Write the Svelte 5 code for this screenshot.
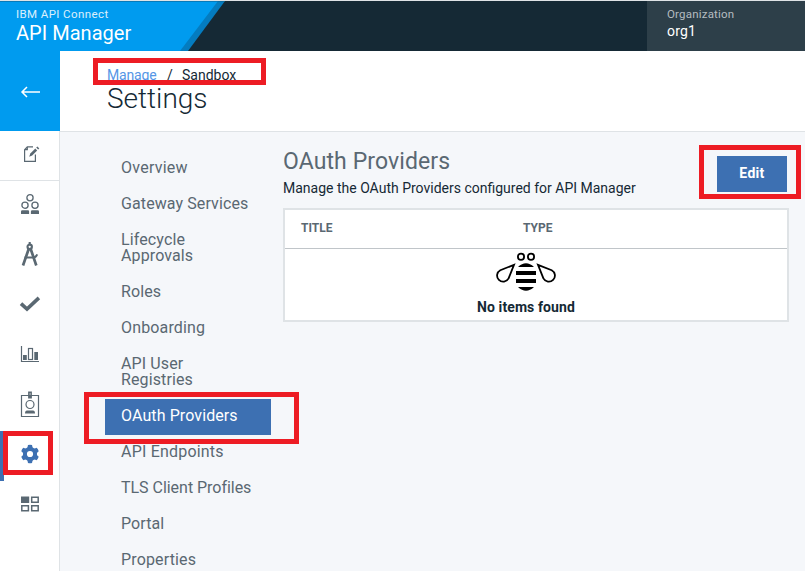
<script>
  const nav = [
    { lines: ['Overview'], ls: 0.25 },
    { lines: ['Gateway Services'], ls: 0.1 },
    { lines: ['Lifecycle', 'Approvals'], ls: 0.12 },
    { lines: ['Roles'], ls: 0.1 },
    { lines: ['Onboarding'], ls: 0.15 },
    { lines: ['API User', 'Registries'], ls: 0.12 },
    { lines: ['OAuth Providers'], ls: 0.1, active: true },
    { lines: ['API Endpoints'], ls: 0.2 },
    { lines: ['TLS Client Profiles'], ls: -0.03 },
    { lines: ['Portal'], ls: 0.1 },
    { lines: ['Properties'], ls: 0.15 }
  ];
</script>

<div class="app">
  <header class="top">
    <svg class="wedge" width="240" height="50" viewBox="0 0 240 50">
      <path d="M0 0H225L188 50H0Z" fill="#047cc0" />
      <path d="M0 0H218L180 50H0Z" fill="#009bef" />
      <path d="M0 0H225V.6H0Z" fill="#0f5a85" />
    </svg>
    <div class="brand">
      <div class="product">IBM API Connect</div>
      <div class="name">API Manager</div>
    </div>
    <div class="org">
      <div class="org-label">Organization</div>
      <div class="org-name">org1</div>
    </div>
  </header>

  <div class="body">
    <aside class="rail">
      <div class="back">
        <svg width="20" height="14" viewBox="0 0 20 14" fill="none" stroke="#fff" stroke-width="1.5">
          <path d="M7 2L2 7L7 12M2 7H20" />
        </svg>
      </div>
      <div class="slot first">
        <svg width="20" height="20" viewBox="0 0 20 20" fill="none" stroke="#5a6872" stroke-width="1.2">
          <path d="M12 2.9H6.3L3.6 5.7V17.4H14.4V10.5M3.6 5.7H6.3V2.9" />
          <path d="M8.2 12.8L9.3 9.6L14.3 4.5L16.2 6.4L11.2 11.6Z" fill="#5a6872" stroke="none" />
          <path d="M15.2 3.6L16.4 2.5L18.3 4.4L17.1 5.5Z" fill="#5a6872" stroke="none" />
        </svg>
      </div>
      <div class="slot">
        <svg width="20" height="22" viewBox="0 0 20 22" fill="none" stroke="#5a6872" stroke-width="1.3">
          <circle cx="10" cy="4.7" r="3.1" /><circle cx="5" cy="12.2" r="3.1" /><circle cx="15" cy="12.2" r="3.1" />
          <path d="M1 21V18.5Q1 17.2 2.3 17.2H8Q9.1 17.2 9.1 18.5V21ZM10.9 21V18.5Q10.9 17.2 12.2 17.2H17.7Q19 17.2 19 18.5V21Z" fill="#5a6872" stroke="none" />
        </svg>
      </div>
      <div class="slot">
        <svg width="20" height="26" viewBox="0 0 20 26" fill="none" stroke="#5a6872" stroke-width="2.1">
          <path d="M9.7 1V4" /><circle cx="9.7" cy="5.8" r="2.2" />
          <path d="M8.7 8L3 24.5M10.7 8L16.3 24.5" stroke-width="2.7" />
          <path d="M4.5 16.5H13.5Q16 16.3 17.2 13.3" stroke-width="2" />
        </svg>
      </div>
      <div class="slot">
        <svg width="22" height="18" viewBox="0 0 22 18" fill="none" stroke="#5a6872" stroke-width="3.6">
          <path d="M2 8.6L8 14.1L19.9 2.9" />
        </svg>
      </div>
      <div class="slot">
        <svg width="20" height="18" viewBox="0 0 20 18" fill="none" stroke="#5a6872" stroke-width="1.2">
          <path d="M1.5 1V16.5H19" />
          <rect x="8.5" y="3.5" width="4" height="11" />
          <path d="M3 10H6.8V15H3ZM14.3 7H18V15H14.3Z" fill="#5a6872" stroke="none" />
        </svg>
      </div>
      <div class="slot">
        <svg width="20" height="28" viewBox="0 0 20 28" fill="none" stroke="#5a6872" stroke-width="1.2">
          <path d="M1.5 5.5H18.5V26.5H1.5Z" />
          <path d="M8.1 1.5H11.9V8.5H8.1Z" fill="#5a6872" stroke="none" /><path d="M9.5 4H10.7" stroke="#fff" />
          <circle cx="10" cy="14.5" r="4" />
          <path d="M5 23.5Q5 20.5 7 20.5H13Q15 20.5 15 23.5Z" fill="#5a6872" stroke="none" />
        </svg>
      </div>
      <div class="slot selected">
        <svg width="20" height="20" viewBox="0 0 20 20">
          <circle cx="10" cy="10" r="5.1" fill="none" stroke="#3d70b2" stroke-width="4" />
          <g fill="#3d70b2">
            {#each [0, 60, 120, 180, 240, 300] as a}
              <path transform="rotate({a} 10 10)" d="M7.2 4.6L8 1.1Q10 .6 12 1.1L12.8 4.6Z" />
            {/each}
          </g>
        </svg>
      </div>
      <div class="slot">
        <svg width="20" height="16" viewBox="0 0 20 16" fill="none" stroke="#5a6872" stroke-width="1.5">
          <path d="M1 .5H9.2V7H1Z" fill="#5a6872" stroke="none" />
          <path d="M11.7 1.2H18.2V6.3H11.7ZM1.8 9.7H8.4V14.8H1.8ZM11.7 9.7H18.2V14.8H11.7Z" />
        </svg>
      </div>
    </aside>

    <main>
      <div class="page-head">
        <div class="crumbs"><span class="link">Manage</span><span class="sep">/</span><span class="here">Sandbox</span></div>
        <h1>Settings</h1>
      </div>
      <div class="columns">
        <nav>
          {#each nav as item}
            <div class="item" class:active={item.active} style="letter-spacing:{item.ls}px">
              {#each item.lines as line}<div>{line}</div>{/each}
            </div>
          {/each}
        </nav>
        <section>
          <div class="section-head">
            <div>
              <h2>OAuth Providers</h2>
              <p>Manage the OAuth Providers configured for API Manager</p>
            </div>
            <button>Edit</button>
          </div>
          <div class="table">
            <div class="thead"><span class="c1">TITLE</span><span class="c2">TYPE</span></div>
            <div class="empty">
              <svg width="60" height="40" viewBox="0 0 60 40" fill="none" stroke="#000" stroke-width="1.8">
                <circle cx="25" cy="4.7" r="3.1" /><circle cx="35" cy="4.7" r="3.1" />
                <path d="M18 12.8L4.3 18.2A6.1 6.1 0 1 0 12.6 26.4Z" />
                <path d="M42 12.8L55.7 18.2A6.1 6.1 0 1 1 47.4 26.4Z" />
                <path d="M22 15Q30 7.5 38 15ZM20 19H40V23H20ZM20 27H40V31H20ZM22 35H38Q30 42.5 22 35Z" fill="#000" stroke="none" />
              </svg>
              <div class="none">No items found</div>
            </div>
          </div>
        </section>
      </div>
    </main>
  </div>

  <div class="mark crumb-mark"></div>
  <div class="mark edit-mark"></div>
  <div class="mark nav-mark"></div>
  <div class="mark gear-mark"></div>
</div>

<style>
  .app {
    position: relative;
    width: 805px;
    height: 571px;
    overflow: hidden;
    background: #f5f7fa;
    color: #152935;
    font-family: Roboto, "Liberation Sans", sans-serif;
    font-size: 14px;
  }
  .app * { box-sizing: border-box; }
  .top {
    position: relative;
    display: flex;
    justify-content: space-between;
    height: 51px;
    background: #152935;
    border-top: 1px solid #dfe3e6;
  }
  .wedge { position: absolute; left: 0; top: 0; }
  .brand { position: relative; padding: 5px 0 0 16px; color: #fff; white-space: nowrap; }
  .product { font-size: 11.5px; line-height: 17px; letter-spacing: .4px; opacity: .85; }
  .name { font-size: 20px; line-height: 20px; letter-spacing: .03px; }
  .org { width: 158px; padding: 5px 0 0 20px; background: #2d3f49; color: #fff; }
  .org-label { font-size: 11.5px; line-height: 17px; letter-spacing: .2px; color: #b5bcc0; }
  .org-name { font-size: 14px; line-height: 17px; letter-spacing: .2px; }
  .body { display: flex; height: 520px; }
  .rail { width: 60px; background: #fff; border-right: 1px solid #dfe3e6; }
  .back {
    display: flex;
    align-items: center;
    width: 60px;
    height: 80px;
    padding: 2px 0 0 20px;
    background: #009bef;
  }
  .slot {
    display: flex;
    align-items: center;
    justify-content: center;
    height: 50px;
    padding: 0 0 4px 1px;
  }
  .slot.first { border-bottom: 1px solid #dfe3e6; padding-left: 2px; }
  .slot.selected { border-left: 4px solid #3d70b2; padding-right: 3px; padding-left: 0; }
  main { flex: 1; }
  .page-head { height: 81px; padding: 16px 0 0 47px; background: #fff; border-bottom: 1px solid #dfe3e6; }
  .crumbs { display: flex; line-height: 17px; font-size: 14px; }
  .link { width: 60px; color: #5596e6; letter-spacing: -.15px; }
  .sep { width: 15px; }
  h1 { margin: 0; font-size: 28px; font-weight: 300; line-height: 30px; letter-spacing: 0; }
  .columns { display: flex; }
  nav { width: 223px; padding: 19px 0 0 45px; color: #5a6872; font-size: 16px; line-height: 16px; }
  .item { width: 166px; padding: 9px 0 11px 16px; white-space: nowrap; }
  .active { background: #3d70b2; color: #fff; }
  section { width: 506px; padding-top: 15px; }
  .section-head { display: flex; justify-content: space-between; height: 61px; }
  h2 { margin: 0; font-size: 23px; font-weight: 400; line-height: 30px; letter-spacing: .1px; color: #5a6872; }
  p { margin: 3px 0 0; line-height: 16px; white-space: nowrap; }
  button {
    width: 70px;
    height: 36px;
    margin: 9px 2px 0 0;
    border: 0;
    padding: 0 0 2px;
    background: #3d70b2;
    color: #fff;
    font: 700 14px Roboto, sans-serif;
    letter-spacing: .3px;
  }
  .table { height: 114px; border: 2px solid #dfe3e6; background: #fff; }
  .thead {
    display: flex;
    height: 39px;
    padding: 0 0 0 16px;
    border-bottom: 1px solid #c0c5c9;
    line-height: 36px;
    font-size: 12px;
    font-weight: 700;
    color: #5a6872;
  }
  .c1 { width: 222px; }
  .empty { display: flex; flex-direction: column; align-items: center; padding: 3px 20px 0 0; }
  .none { margin-top: 7px; line-height: 16px; font-weight: 700; letter-spacing: .1px; }
  .mark { position: absolute; border: 5px solid #ed1c24; }
  .crumb-mark { left: 93px; top: 58px; width: 173px; height: 27px; }
  .edit-mark { left: 699px; top: 145px; width: 102px; height: 54px; }
  .nav-mark { left: 84px; top: 392px; width: 215px; height: 52px; }
  .gear-mark { left: 3px; top: 431px; width: 50px; height: 44px; }
</style>
